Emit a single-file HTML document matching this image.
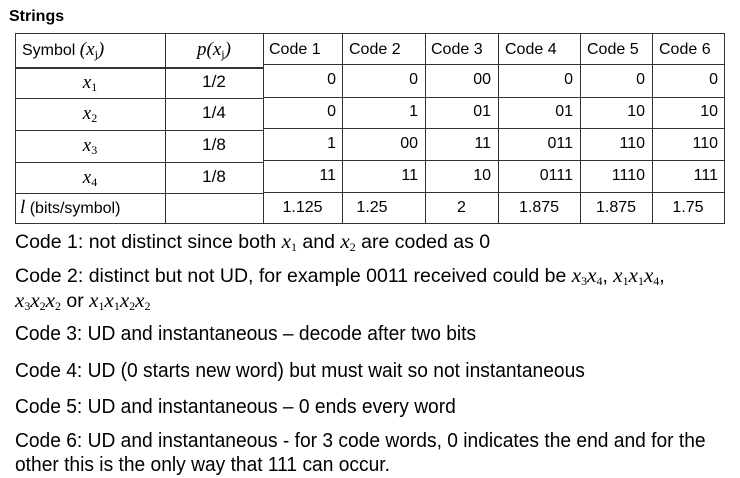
<!DOCTYPE html>
<html><head><meta charset="utf-8"><style>
body{margin:0;width:740px;height:478px;background:#fff;position:relative;overflow:hidden;font-family:"Liberation Sans",Arial,sans-serif;color:#000}
.a{position:absolute;white-space:nowrap}
.h{left:0;height:1px;background:#333;position:absolute}
.v{top:0;width:1px;background:#333;position:absolute}
.c{position:absolute;font-size:16px;line-height:30px;white-space:nowrap}
.m{font-family:"Liberation Serif",serif;font-style:italic;font-size:19px}
.r{text-align:right}
.ct{text-align:center}
sub{font-size:12px;font-style:normal;vertical-align:-3px}
.t{position:absolute;left:15px;font-size:19.5px;line-height:22px;white-space:nowrap;transform-origin:0 50%}
.t .m{font-size:21px}
.n{font-size:20px;transform:scaleX(0.96)}
</style></head><body>
<div class="a" style="left:9px;top:8px;font-weight:bold;font-size:16px">Strings</div>

<div class="h" style="left:15px;width:248px;top:33px"></div>
<div class="h" style="left:15px;width:248px;top:67px;height:2px"></div>
<div class="h" style="left:15px;width:248px;top:98px"></div>
<div class="h" style="left:15px;width:248px;top:130px"></div>
<div class="h" style="left:15px;width:248px;top:162px"></div>
<div class="h" style="left:15px;width:248px;top:193px"></div>
<div class="h" style="left:15px;width:248px;top:223px"></div>
<div class="v" style="left:15px;top:33px;height:191px"></div>
<div class="v" style="left:165px;top:33px;height:191px"></div>
<div class="h" style="left:263px;width:462px;top:33px"></div>
<div class="h" style="left:263px;width:462px;top:64px"></div>
<div class="h" style="left:263px;width:462px;top:97px"></div>
<div class="h" style="left:263px;width:462px;top:128px"></div>
<div class="h" style="left:263px;width:462px;top:160px"></div>
<div class="h" style="left:263px;width:462px;top:192px"></div>
<div class="h" style="left:263px;width:462px;top:223px"></div>
<div class="v" style="left:263px;top:33px;height:191px"></div>
<div class="v" style="left:342px;top:33px;height:191px"></div>
<div class="v" style="left:425px;top:33px;height:191px"></div>
<div class="v" style="left:498px;top:33px;height:191px"></div>
<div class="v" style="left:580px;top:33px;height:191px"></div>
<div class="v" style="left:652px;top:33px;height:191px"></div>
<div class="v" style="left:724px;top:33px;height:191px"></div>

<div class="c" style="left:22px;top:35px">Symbol <span class="m">(x<sub>j</sub>)</span></div>
<div class="c ct m" style="left:165px;width:98px;top:35px">p(x<sub>j</sub>)</div>
<div class="c ct m" style="left:15px;width:150px;top:68px">x<sub>1</sub></div>
<div class="c ct m" style="left:15px;width:150px;top:99px">x<sub>2</sub></div>
<div class="c ct m" style="left:15px;width:150px;top:131px">x<sub>3</sub></div>
<div class="c ct m" style="left:15px;width:150px;top:163px">x<sub>4</sub></div>
<div class="c ct" style="left:165px;width:98px;top:67px;font-size:17px">1/2</div>
<div class="c ct" style="left:165px;width:98px;top:98px;font-size:17px">1/4</div>
<div class="c ct" style="left:165px;width:98px;top:130px;font-size:17px">1/8</div>
<div class="c ct" style="left:165px;width:98px;top:162px;font-size:17px">1/8</div>
<div class="c" style="left:20px;top:193px"><span class="m">l</span> (bits/symbol)</div>

<div class="c" style="left:269px;top:35px">Code 1</div>
<div class="c" style="left:349px;top:35px">Code 2</div>
<div class="c" style="left:431px;top:35px">Code 3</div>
<div class="c" style="left:505px;top:35px">Code 4</div>
<div class="c" style="left:587px;top:35px">Code 5</div>
<div class="c" style="left:659px;top:35px">Code 6</div>

<div class="c r" style="left:263px;width:73px;top:65px">0</div>
<div class="c r" style="left:342px;width:76px;top:65px">0</div>
<div class="c r" style="left:425px;width:66px;top:65px">00</div>
<div class="c r" style="left:498px;width:75px;top:65px">0</div>
<div class="c r" style="left:580px;width:65px;top:65px">0</div>
<div class="c r" style="left:652px;width:66px;top:65px">0</div>

<div class="c r" style="left:263px;width:73px;top:97px">0</div>
<div class="c r" style="left:342px;width:76px;top:97px">1</div>
<div class="c r" style="left:425px;width:66px;top:97px">01</div>
<div class="c r" style="left:498px;width:75px;top:97px">01</div>
<div class="c r" style="left:580px;width:65px;top:97px">10</div>
<div class="c r" style="left:652px;width:66px;top:97px">10</div>

<div class="c r" style="left:263px;width:73px;top:129px">1</div>
<div class="c r" style="left:342px;width:76px;top:129px">00</div>
<div class="c r" style="left:425px;width:66px;top:129px">11</div>
<div class="c r" style="left:498px;width:75px;top:129px">011</div>
<div class="c r" style="left:580px;width:65px;top:129px">110</div>
<div class="c r" style="left:652px;width:66px;top:129px">110</div>

<div class="c r" style="left:263px;width:73px;top:161px">11</div>
<div class="c r" style="left:342px;width:76px;top:161px">11</div>
<div class="c r" style="left:425px;width:66px;top:161px">10</div>
<div class="c r" style="left:498px;width:75px;top:161px">0111</div>
<div class="c r" style="left:580px;width:65px;top:161px">1110</div>
<div class="c r" style="left:652px;width:66px;top:161px">111</div>

<div class="c ct" style="left:263px;width:79px;top:193px">1.125</div>
<div class="c ct" style="left:342px;width:60px;top:193px">1.25</div>
<div class="c ct" style="left:425px;width:73px;top:193px">2</div>
<div class="c ct" style="left:498px;width:82px;top:193px">1.875</div>
<div class="c ct" style="left:580px;width:72px;top:193px">1.875</div>
<div class="c ct" style="left:652px;width:72px;top:193px">1.75</div>

<div class="t" style="top:230px">Code 1: not distinct since both <span class="m">x<sub>1</sub></span> and <span class="m">x<sub>2</sub></span> are coded as 0</div>
<div class="t" style="top:264px">Code 2: distinct but not UD, for example 0011 received could be <span class="m">x<sub>3</sub>x<sub>4</sub></span>, <span class="m">x<sub>1</sub>x<sub>1</sub>x<sub>4</sub></span>,</div>
<div class="t" style="top:289px"><span class="m">x<sub>3</sub>x<sub>2</sub>x<sub>2</sub></span> or <span class="m">x<sub>1</sub>x<sub>1</sub>x<sub>2</sub>x<sub>2</sub></span></div>
<div class="t n" style="top:323px">Code 3: UD and instantaneous – decode after two bits</div>
<div class="t n" style="top:360px">Code 4: UD (0 starts new word) but must wait so not instantaneous</div>
<div class="t n" style="top:396px">Code 5: UD and instantaneous – 0 ends every word</div>
<div class="t n" style="top:430px">Code 6: UD and instantaneous - for 3 code words, 0 indicates the end and for the</div>
<div class="t n" style="top:454px">other this is the only way that 111 can occur.</div>
</body></html>
